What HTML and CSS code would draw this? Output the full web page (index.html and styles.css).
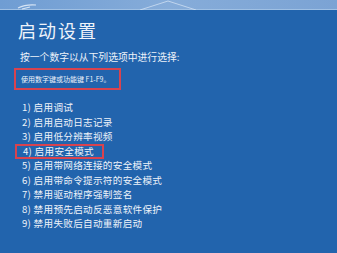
FILE: index.html
```html
<!DOCTYPE html>
<html lang="zh-CN">

<head>
    <meta charset="UTF-8">
    <meta name="viewport" content="width=device-width, initial-scale=1.0">
    <title>启动设置</title>
    <link rel="stylesheet" href="styles.css">
</head>

<body>
    <div class="topbar">
        <svg class="deco" width="337" height="10" viewBox="0 0 337 10">
            <path d="M18 8 Q26 4 36 5 M22 9 L30 7" stroke="#d6e4f4" stroke-width="1.2" fill="none" />
            <path d="M140 10 L168 1 L196 10" stroke="#cfe0f2" stroke-width="0.8" fill="none" />
        </svg>
    </div>
    <div class="screen">
        <h1 class="title">启动设置</h1>
        <p class="subtitle">按一个数字以从下列选项中进行选择:</p>
        <div class="hint">使用数字键或功能键 F1-F9。</div>

        <ul class="options">
            <li>1) 启用调试</li>
            <li>2) 启用启动日志记录</li>
            <li>3) 启用低分辨率视频</li>
            <li><span class="marked">4) 启用安全模式</span></li>
            <li>5) 启用带网络连接的安全模式</li>
            <li>6) 启用带命令提示符的安全模式</li>
            <li>7) 禁用驱动程序强制签名</li>
            <li>8) 禁用预先启动反恶意软件保护</li>
            <li>9) 禁用失败后自动重新启动</li>
        </ul>
    </div>
</body>

</html>
```

FILE: styles.css
```css
body {
    margin: 0;
    background-color: #2264ad;
    color: #eef3fa;
    font-family: "Noto Sans CJK SC", "Noto Sans", sans-serif;
    overflow: hidden;
}

.topbar {
    height: 10px;
    background: linear-gradient(to right, #6f9dd3, #86acd9 50%, #7ba3d4);
    border-bottom: 1px solid #9fc0e4;
    box-sizing: border-box;
}

.deco {
    display: block;
}

.screen {
    padding-left: 20px;
}

.title {
    margin: 9px 0 0 -2px;
    font-size: 18px;
    line-height: 22px;
    font-weight: normal;
    letter-spacing: 2px;
}

.subtitle {
    margin: 9px 0 0 0;
    font-size: 9.8px;
    line-height: 14px;
}

.hint {
    width: fit-content;
    margin: 4px 0 0 -6px;
    padding: 3px 8px 3px 5px;
    border: 2px solid #d8434f;
    font-size: 7px;
    line-height: 12px;
}

.options {
    list-style: none;
    margin: 10px 0 0 0;
    padding: 0 0 0 2px;
    font-size: 9.6px;
    line-height: 14.5px;
}

.options li {
    height: 14.5px;
    letter-spacing: 0.3px;
}

.marked {
    display: inline-block;
    margin-left: -7px;
    padding: 0 8px 0 6px;
    line-height: 11px;
    border: 2px solid #d8434f;
    vertical-align: top;
}
```
